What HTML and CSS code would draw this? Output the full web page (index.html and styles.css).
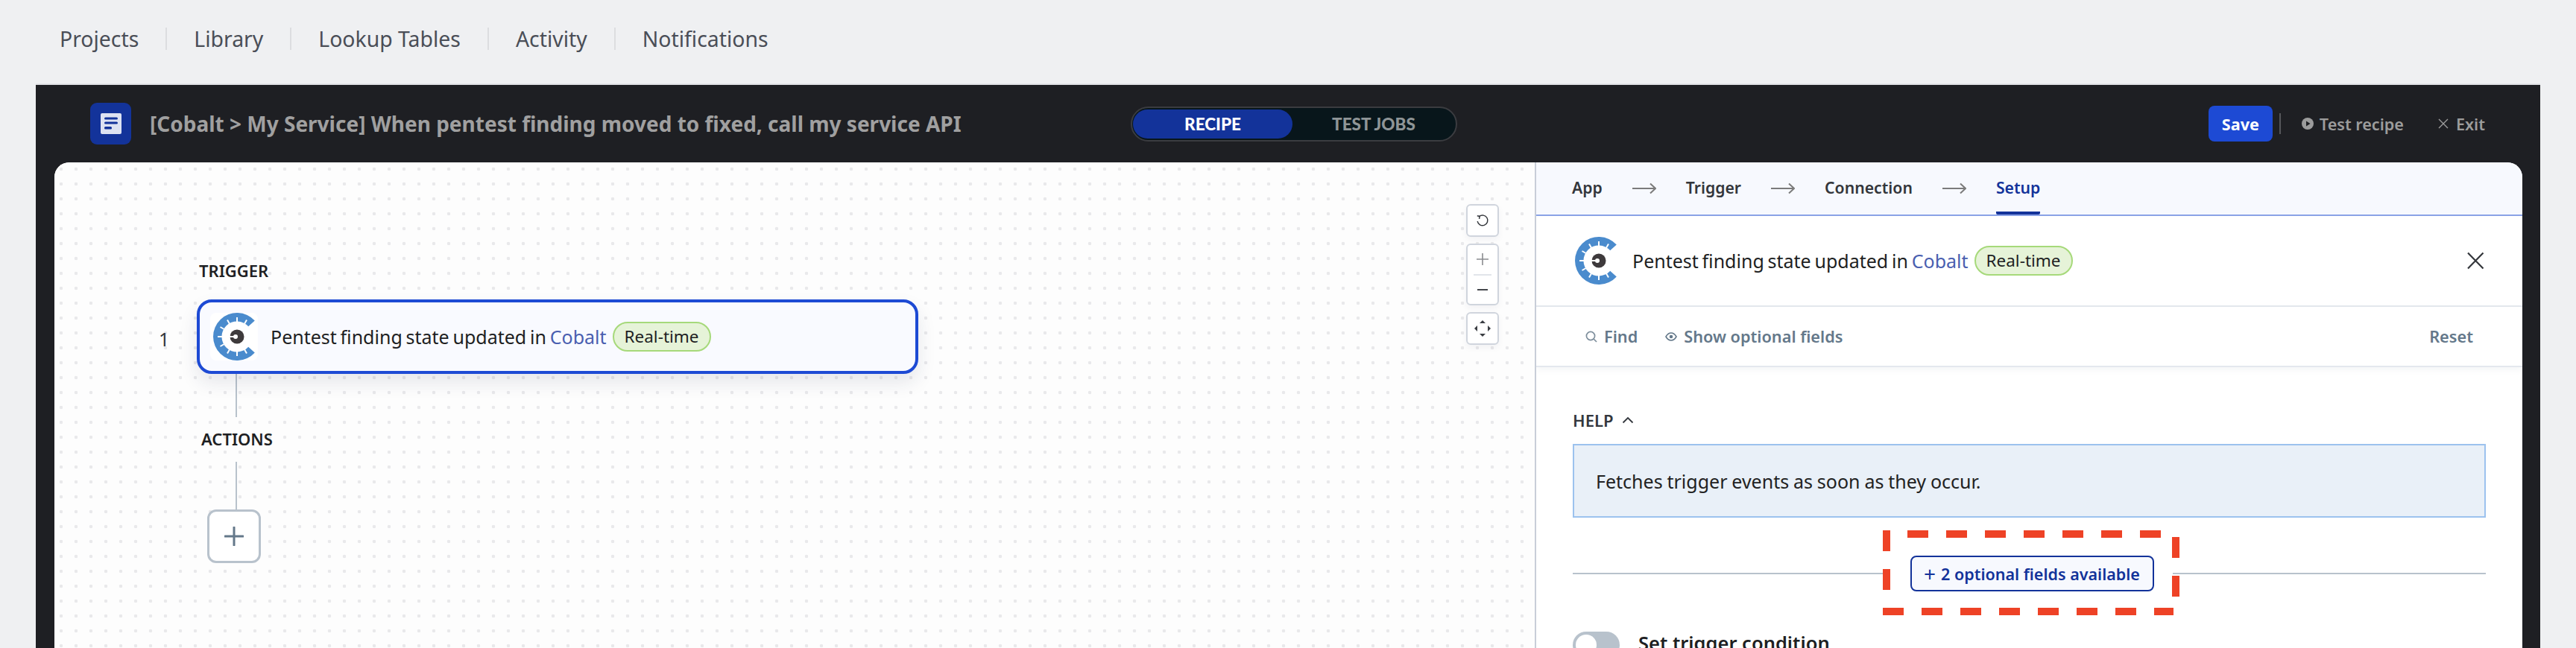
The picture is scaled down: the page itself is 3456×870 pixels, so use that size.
FILE: index.html
```html
<html>
<head>
<title>Cobalt recipe editor</title>
<link rel="stylesheet" href="styles.css">
</head>

<body>
<svg class="defs" width="0" height="0">
<symbol id="cobalt" viewBox="0 0 64 64">
<path d="M59.8 10.6A32 32 0 1 0 59.8 53.4L51.2 45.7A20.5 20.5 0 1 1 51.2 18.3Z" fill="#4a8bcd"/>
<g stroke="#fff" stroke-width="2">
<path d="M36 12V6"/><path d="M46 14.7L49 9.5"/><path d="M26 14.7L23 9.5"/>
<path d="M18.7 22L13.5 19"/><path d="M16 32H10"/><path d="M18.7 42L13.5 45"/>
<path d="M26 49.3L23 54.5"/><path d="M36 52V58"/><path d="M46 49.3L49 54.5"/>
</g>
<circle cx="36" cy="32" r="9.5" fill="#3e3a3c"/>
<circle cx="34" cy="32" r="3" fill="#fff"/>
<path d="M26 32H32" stroke="#fff" stroke-width="2"/>
</symbol>
</svg>

<div class="topnav">
<a class="navitem">Projects</a>
<a class="navitem">Library</a>
<a class="navitem">Lookup Tables</a>
<a class="navitem">Activity</a>
<a class="navitem last">Notifications</a>
</div>

<div class="app">
<div class="appbar">
<div class="recipe-title">
<svg class="recipe-icon" viewBox="0 0 55 56">
<rect width="55" height="56" rx="9" fill="#13339a"/>
<rect x="14" y="14" width="28" height="28" rx="2" fill="#dde2f2"/>
<rect x="19" y="19.5" width="18" height="3" rx="1.5" fill="#13339a"/>
<rect x="19" y="25.5" width="18" height="3" rx="1.5" fill="#13339a"/>
<rect x="19" y="32" width="10" height="3.5" rx="1.5" fill="#13339a"/>
</svg>
<span>[Cobalt &gt; My Service] When pentest finding moved to fixed, call my service API</span>
</div>
<div class="mode">
<span class="mode-on">RECIPE</span>
<span class="mode-off">TEST JOBS</span>
</div>
<div class="actions">
<button class="save">Save</button>
<span class="actions-sep"></span>
<a class="action test">
<svg width="16" height="16" viewBox="0 0 16 16"><circle cx="8" cy="8" r="8" fill="#9c9c9c"/><path d="M6 4.5L11.5 8L6 11.5Z" fill="#1e1f23"/></svg>
Test recipe</a>
<a class="action exit">
<svg width="14" height="14" viewBox="0 0 14 14"><path d="M1 1L13 13M13 1L1 13" stroke="#9c9c9c" stroke-width="1.4" fill="none"/></svg>
Exit</a>
</div>
</div>

<div class="card">
<div class="canvas">
<div class="flow-label">TRIGGER</div>
<div class="step">
<span class="step-num">1</span>
<div class="step-card">
<svg class="step-logo"><use href="#cobalt"/></svg>
<span class="step-text">Pentest finding state updated in <span class="applink">Cobalt</span></span>
<span class="badge">Real-time</span>
</div>
</div>
<div class="connector first"></div>
<div class="flow-label actions-label">ACTIONS</div>
<div class="connector second"></div>
<div class="addstep">
<svg width="26" height="26" viewBox="0 0 26 26"><path d="M13 1V25M1 13H25" stroke="#64788a" stroke-width="3" stroke-linecap="round"/></svg>
</div>

<div class="zoomctl">
<div class="zoombtn">
<svg width="18" height="18" viewBox="0 0 18 18"><path d="M4.6 3.6A6.9 6.9 0 1 1 2.2 10" fill="none" stroke="#33363b" stroke-width="1.5"/><path d="M1.8 2.8L5 3.4L4.6 6.8" fill="none" stroke="#33363b" stroke-width="1.5"/></svg>
</div>
<div class="zoombtn group">
<div class="zoomhalf"><svg width="16" height="16" viewBox="0 0 16 16"><path d="M8 0V16M0 8H16" stroke="#8a8c90" stroke-width="1.6"/></svg></div>
<div class="zoomhalf"><svg width="14" height="4" viewBox="0 0 14 4"><path d="M0 2H14" stroke="#44474c" stroke-width="2"/></svg></div>
</div>
<div class="zoombtn">
<svg width="24" height="24" viewBox="0 0 24 24" fill="#3a3d42"><path d="M12 1L16 5H8Z"/><path d="M12 23L8 19H16Z"/><path d="M1 12L5 8V16Z"/><path d="M23 12L19 16V8Z"/></svg>
</div>
</div>
</div>

<div class="panel">
<div class="tabs">
<span class="tab">App</span>
<svg class="tab-arrow" viewBox="0 0 32 16"><path d="M0 8H31M24 1.5L31 8L24 14.5" fill="none" stroke="#7b7b7b" stroke-width="2"/></svg>
<span class="tab">Trigger</span>
<svg class="tab-arrow" viewBox="0 0 32 16"><path d="M0 8H31M24 1.5L31 8L24 14.5" fill="none" stroke="#7b7b7b" stroke-width="2"/></svg>
<span class="tab">Connection</span>
<svg class="tab-arrow" viewBox="0 0 32 16"><path d="M0 8H31M24 1.5L31 8L24 14.5" fill="none" stroke="#7b7b7b" stroke-width="2"/></svg>
<span class="tab current">Setup</span>
</div>

<div class="panel-head">
<svg class="panel-logo"><use href="#cobalt"/></svg>
<span class="step-text">Pentest finding state updated in <span class="applink">Cobalt</span></span>
<span class="badge">Real-time</span>
<svg class="panel-close" width="24" height="24" viewBox="0 0 24 24"><path d="M2 1.5L22.5 22.5M22.5 1.5L2 22.5" stroke="#33363b" stroke-width="2.2" fill="none"/></svg>
</div>

<div class="tools">
<a class="tool find">
<svg width="16" height="16" viewBox="0 0 16 16" fill="none" stroke="#7d8e9c" stroke-width="1.7"><circle cx="7" cy="7" r="5.6"/><path d="M11 11L15 15"/></svg>
Find</a>
<a class="tool showopt">
<svg width="16" height="12" viewBox="0 0 16 12" fill="none" stroke="#64788a" stroke-width="1.6"><path d="M1 6C3 2.5 5.5 1 8 1S13 2.5 15 6C13 9.5 10.5 11 8 11S3 9.5 1 6Z"/><circle cx="8" cy="6" r="1.5" fill="#64788a"/></svg>
Show optional fields</a>
<a class="tool reset">Reset</a>
</div>

<div class="helphead">HELP
<svg width="16" height="10" viewBox="0 0 16 10"><path d="M1.5 8.5L8 2L14.5 8.5" fill="none" stroke="#33373d" stroke-width="1.8"/></svg>
</div>
<div class="helpbox">Fetches trigger events as soon as they occur.</div>

<div class="optional">
<span class="rule"></span>
<button class="optbtn"><span class="optplus">+</span><span>2 optional fields available</span></button>
<span class="rule"></span>
</div>

<div class="condition">
<span class="switch"><span class="knob"></span></span>
<span>Set trigger condition</span>
</div>
</div>
</div>
</div>

<svg class="callout" width="398" height="115" viewBox="0 0 398 115" fill="none" stroke="#ee4226" stroke-width="10">
<path d="M33 5H373" stroke-dasharray="28 24"/>
<path d="M0 109H390" stroke-dasharray="28 24"/>
<path d="M5 0V80" stroke-dasharray="28 24"/>
<path d="M393 9V89" stroke-dasharray="28 24"/>
</svg>
</body>
</html>
```

FILE: styles.css
```css
html, body {
margin:0;
height:870px;
overflow:hidden;
}
body {
position:relative;
background-color:#eff0f2;
font-family:"Noto Sans", "Liberation Sans", sans-serif;
color:#1e1f23;
}
.defs {
display:block;
height:0;
}

/* top links */
.topnav {
height:112px;
padding:0 0 8px 44px;
box-sizing:border-box;
display:flex;
align-items:center;
}
.navitem {
font-size:28.4px;
line-height:30px;
color:#4a4e57;
padding:0 36px;
border-right:2px solid #dcdde0;
}
.navitem.last {
border-right:none;
}

/* dark frame */
.app {
margin:0 48px;
height:758px;
border-top:2px solid #e2e3e6;
box-sizing:border-box;
background-color:#1e1f23;
overflow:hidden;
}
.appbar {
height:104px;
padding:0 74px 0 73px;
display:flex;
align-items:center;
}
.recipe-title {
width:1396px;
flex:none;
display:flex;
align-items:center;
gap:25px;
font-size:28px;
font-weight:700;
color:#a0a0a0;
}
.recipe-icon {
width:55px;
height:56px;
}
.mode {
width:438px;
height:47px;
box-sizing:border-box;
border:2px solid #3b3c40;
border-radius:24px;
background-color:#08161b;
padding:2px 1px;
display:flex;
align-items:stretch;
font-family:"Lato", sans-serif;
font-size:22.5px;
font-weight:900;
text-align:center;
}
.mode-on {
width:214px;
line-height:39px;
border-radius:20px;
background-color:#13339a;
color:#fff;
}
.mode-off {
flex:1;
line-height:39px;
color:#8f9597;
}
.actions {
margin-left:auto;
display:flex;
align-items:center;
font-size:21.6px;
font-weight:600;
color:#9c9c9c;
}
.save {
width:86px;
height:48px;
border:none;
border-radius:8px;
background-color:#1d4ad4;
color:#fff;
font:inherit;
font-weight:700;
padding:0;
}
.actions-sep {
width:2px;
height:28px;
margin:0 28px 0 9px;
background-color:#55565a;
}
.action {
display:flex;
align-items:center;
gap:8px;
}
.exit {
margin-left:46px;
gap:10px;
}

/* white card */
.card {
margin:0 24px 0 25px;
height:652px;
border-radius:20px 20px 0 0;
overflow:hidden;
display:flex;
background-color:#fff;
}
.canvas {
position:relative;
width:1988px;
flex:none;
box-sizing:border-box;
border-right:2px solid #c8ced8;
padding:130px 0 0 140px;
background-color:#fdfdfd;
background-image:radial-gradient(circle at 9px 9px, #e9e9eb 2px, transparent 2.6px);
background-size:20px 20px;
}
.flow-label {
font-size:22px;
line-height:30px;
font-weight:600;
margin-left:54px;
}
.step {
display:flex;
height:100px;
margin-top:24px;
}
.step-num {
width:51px;
font-size:25px;
line-height:106px;
color:#33363b;
}
.step-card {
width:968px;
height:100px;
box-sizing:border-box;
border:4px solid #1d4ad4;
border-radius:20px;
background-color:#f9faff;
box-shadow:0 12px 24px rgba(30,40,80,.1);
padding-left:14px;
display:flex;
align-items:center;
gap:17px;
font-size:25px;
}
.step-text {
word-spacing:-1.7px;
}
.step-logo {
width:64px;
height:64px;
background-color:#fff;
border-radius:8px;
}
.applink {
color:#4a5fb0;
}
.badge {
height:40px;
box-sizing:border-box;
border:2px solid #a6d97a;
border-radius:20px;
background-color:#e6f3d8;
padding:0 14px;
font-size:22.5px;
line-height:35px;
margin-left:-9px;
}
.connector {
width:2px;
background-color:#b8c2cc;
margin-left:103px;
}
.connector.first {
height:60px;
margin-top:-2px;
}
.actions-label {
margin-top:14px;
margin-left:57px;
}
.connector.second {
height:64px;
margin-top:16px;
}
.addstep {
width:72px;
height:72px;
box-sizing:border-box;
margin-left:65px;
border:3px solid #b8c2cc;
border-radius:12px;
background-color:#fff;
display:flex;
align-items:center;
justify-content:center;
}
.zoomctl {
position:absolute;
top:56px;
right:48px;
width:44px;
display:flex;
flex-direction:column;
gap:9px;
}
.zoombtn {
height:44px;
box-sizing:border-box;
border:2px solid #d0d5dd;
border-radius:6px;
background-color:#fff;
box-shadow:0 4px 8px rgba(30,40,80,.05);
display:flex;
align-items:center;
justify-content:center;
}
.zoombtn.group {
height:83px;
flex-direction:column;
align-items:stretch;
}
.zoomhalf {
flex:1;
display:flex;
align-items:center;
justify-content:center;
}
.zoomhalf:first-child {
margin:0 8px;
border-bottom:2px solid #e2e5ea;
}

/* right panel */
.panel {
flex:1;
min-width:0;
}
.tabs {
height:72px;
box-sizing:border-box;
padding-left:48px;
background-color:#f7f9fe;
border-bottom:2px solid #8aa2e6;
display:flex;
align-items:stretch;
font-size:21.2px;
font-weight:600;
color:#33363b;
gap:40px;
}
.tab {
display:flex;
align-items:center;
border-bottom:4px solid transparent;
}
.tab.current {
color:#13339a;
border-bottom-color:#13339a;
border-radius:0 0 2px 2px;
}
.tab-arrow {
width:32px;
height:16px;
align-self:center;
}
.panel-head {
height:122px;
box-sizing:border-box;
border-bottom:2px solid #e4e8ee;
padding:0 51px 0 48px;
display:flex;
align-items:center;
gap:17px;
font-size:25px;
}
.panel-logo {
width:64px;
height:64px;
}
.panel-close {
margin-left:auto;
}
.tools {
height:81px;
box-sizing:border-box;
border-bottom:2px solid #e4e8ee;
box-shadow:0 4px 8px rgba(60,80,100,.05);
padding:0 66px;
display:flex;
align-items:center;
font-size:21.7px;
font-weight:600;
color:#64788a;
}
.tool {
display:flex;
align-items:center;
gap:9px;
}
.showopt {
margin-left:37px;
}
.reset {
margin-left:auto;
}
.helphead {
margin:56px 0 0 49px;
font-size:22px;
line-height:30px;
font-weight:600;
color:#33373d;
display:flex;
align-items:center;
gap:12px;
}
.helpbox {
margin:17px 49px 0 49px;
height:99px;
box-sizing:border-box;
border:2px solid #9cc2ee;
background-color:#e9f0f8;
padding-left:29px;
font-size:25px;
word-spacing:-.65px;
line-height:96px;
color:#222;
}
.optional {
margin:51px 49px 0 49px;
display:flex;
align-items:center;
}
.rule {
flex:1;
height:2px;
background-color:#b8c2cc;
}
.optbtn {
width:327px;
height:48px;
margin:0 25px 0 32px;
border:2px solid #13339a;
border-radius:8px;
background-color:#f7f9fe;
color:#13339a;
font:600 21.5px "Noto Sans", "Liberation Sans", sans-serif;
padding:0;
display:flex;
align-items:center;
justify-content:center;
gap:7px;
}
.optplus {
font-size:28px;
font-weight:400;
line-height:28px;
}
.condition {
margin:54px 0 0 49px;
display:flex;
gap:25px;
font-size:25.5px;
line-height:30px;
font-weight:600;
}
.switch {
width:63px;
height:36px;
box-sizing:border-box;
padding:4px;
border-radius:18px;
background-color:#b8c2cc;
}
.knob {
display:block;
width:28px;
height:28px;
border-radius:14px;
background-color:#fff;
}

/* red dashes drawn over the button */
.callout {
position:absolute;
left:2526px;
top:712px;
}
```
